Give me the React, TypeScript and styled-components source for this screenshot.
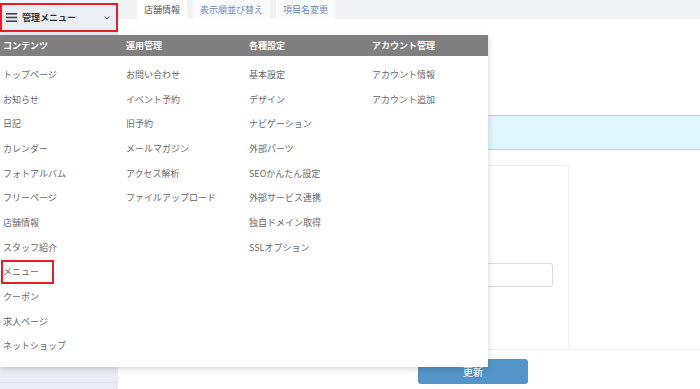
import React from "react";
import styled, { createGlobalStyle } from "styled-components";

const GlobalStyle = createGlobalStyle`
  html, body { margin: 0; padding: 0; background: #ffffff; }
  body { font-family: "Noto Sans CJK JP", "Noto Sans", sans-serif; }
  * { box-sizing: border-box; }
`;

const Page = styled.div`
  position: relative;
  display: flex;
  width: 700px;
  height: 389px;
  overflow: hidden;
  background: #ffffff;
`;

const Sidebar = styled.aside`
  width: 118px;
  flex: none;
  display: flex;
  flex-direction: column;
  background: #e9ecf5;
  border-top: 3px solid #f4f5f8;
`;

const MenuButton = styled.button`
  display: flex;
  align-items: center;
  width: 118px;
  height: 29px;
  padding: 0 6px 0 4px;
  background: #eceef5;
  border: 2px solid #e3202a;
  font-family: inherit;
  font-size: 9px;
  font-weight: 700;
  color: #333;
  cursor: pointer;
`;

const ButtonLabel = styled.span`
  flex: 1;
  text-align: left;
  margin-left: 5px;
`;

const SideNav = styled.div`
  margin-top: 3px;
  display: flex;
  flex-direction: column;
`;

const SideRow = styled.div`
  height: 29px;
  border-bottom: 1px solid #dde1ec;
`;

const Main = styled.main`
  flex: 1;
  display: flex;
  flex-direction: column;
  min-width: 0;
`;

const TabBar = styled.div`
  height: 19px;
  display: flex;
  gap: 6px;
  padding-left: 19px;
  background: #f2f3f5;
`;

const Tab = styled.div<{ $active?: boolean }>`
  display: flex;
  align-items: center;
  padding: 0 7px;
  font-size: 9px;
  background: ${(p) => (p.$active ? "#ffffff" : "#fafbfc")};
  color: ${(p) => (p.$active ? "#555" : "#6a8bc2")};
`;

const InfoBar = styled.div`
  margin: 96px 0 0 12px;
  height: 35px;
  background: #e0f6fe;
  border-top: 1px solid #a6dbef;
  border-bottom: 1px solid #a6dbef;
`;

const Card = styled.div`
  margin: 15px 0 0 12px;
  width: 439px;
  height: 184px;
  border: 1px solid #efefef;
  border-bottom: 0;
  border-radius: 3px 3px 0 0;
  display: flex;
  flex-direction: column;
  align-items: flex-end;
  padding: 97px 15px 0 0;
`;

const TextInput = styled.div`
  width: 260px;
  height: 24px;
  border: 1px solid #dcdcdc;
  border-radius: 3px;
  background: #fff;
`;

const Divider = styled.div`
  margin-left: 12px;
  border-top: 1px solid #f0f0f0;
`;

const ButtonRow = styled.div`
  display: flex;
  padding: 9px 0 0 300px;
`;

const UpdateButton = styled.button`
  width: 110px;
  height: 25px;
  border: 0;
  border-radius: 3px;
  background: #5494c8;
  color: #fff;
  font-family: inherit;
  font-size: 10px;
  font-weight: 500;
`;

const Dropdown = styled.div`
  position: absolute;
  top: 35px;
  left: 0;
  width: 488px;
  height: 332px;
  background: #ffffff;
  box-shadow: 0 2px 7px rgba(0, 0, 0, 0.16);
  display: grid;
  grid-template-columns: 123px 123px 123px 1fr;
  z-index: 10;
`;

const Column = styled.div`
  display: flex;
  flex-direction: column;
`;

const ColumnHeader = styled.div`
  height: 21px;
  display: flex;
  align-items: center;
  padding-left: 3px;
  background: #7f7f7f;
  color: #ffffff;
  font-size: 9px;
  font-weight: 700;
`;

const ItemList = styled.ul`
  list-style: none;
  margin: 0;
  padding: 6px 0 0 0;
`;

const Item = styled.li`
  height: 24.7px;
  display: flex;
  align-items: center;
  padding-left: 3px;
  font-size: 9px;
  color: #6a6a6a;
  white-space: nowrap;
`;

const Highlight = styled.span`
  display: flex;
  align-items: center;
  width: 53px;
  height: 24px;
  margin-left: -2px;
  border: 2px solid #e3202a;
`;

const columns: { title: string; items: string[] }[] = [
  {
    title: "コンテンツ",
    items: [
      "トップページ",
      "お知らせ",
      "日記",
      "カレンダー",
      "フォトアルバム",
      "フリーページ",
      "店舗情報",
      "スタッフ紹介",
      "メニュー",
      "クーポン",
      "求人ページ",
      "ネットショップ",
    ],
  },
  {
    title: "運用管理",
    items: ["お問い合わせ", "イベント予約", "旧予約", "メールマガジン", "アクセス解析", "ファイルアップロード"],
  },
  {
    title: "各種設定",
    items: [
      "基本設定",
      "デザイン",
      "ナビゲーション",
      "外部パーツ",
      "SEOかんたん設定",
      "外部サービス連携",
      "独自ドメイン取得",
      "SSLオプション",
    ],
  },
  { title: "アカウント管理", items: ["アカウント情報", "アカウント追加"] },
];

const Hamburger = () => (
  <svg width="11" height="9" viewBox="0 0 11 9">
    <rect x="0" y="0" width="11" height="1.6" fill="#444" />
    <rect x="0" y="3.7" width="11" height="1.6" fill="#444" />
    <rect x="0" y="7.4" width="11" height="1.6" fill="#444" />
  </svg>
);

const Chevron = () => (
  <svg width="6" height="4" viewBox="0 0 6 4">
    <path d="M0.6 0.6 L3 3 L5.4 0.6" fill="none" stroke="#666" strokeWidth="1" />
  </svg>
);

export default function App() {
  return (
    <>
      <GlobalStyle />
      <Page>
        <Sidebar>
          <MenuButton>
            <Hamburger />
            <ButtonLabel>管理メニュー</ButtonLabel>
            <Chevron />
          </MenuButton>
          <SideNav>
            {Array.from({ length: 12 }).map((_, i) => (
              <SideRow key={i} />
            ))}
          </SideNav>
        </Sidebar>
        <Main>
          <TabBar>
            <Tab $active>店舗情報</Tab>
            <Tab>表示順並び替え</Tab>
            <Tab>項目名変更</Tab>
          </TabBar>
          <InfoBar />
          <Card>
            <TextInput />
          </Card>
          <Divider />
          <ButtonRow>
            <UpdateButton>更新</UpdateButton>
          </ButtonRow>
        </Main>
        <Dropdown>
          {columns.map((col) => (
            <Column key={col.title}>
              <ColumnHeader>{col.title}</ColumnHeader>
              <ItemList>
                {col.items.map((it) => (
                  <Item key={it}>{it === "メニュー" ? <Highlight>{it}</Highlight> : it}</Item>
                ))}
              </ItemList>
            </Column>
          ))}
        </Dropdown>
      </Page>
    </>
  );
}
